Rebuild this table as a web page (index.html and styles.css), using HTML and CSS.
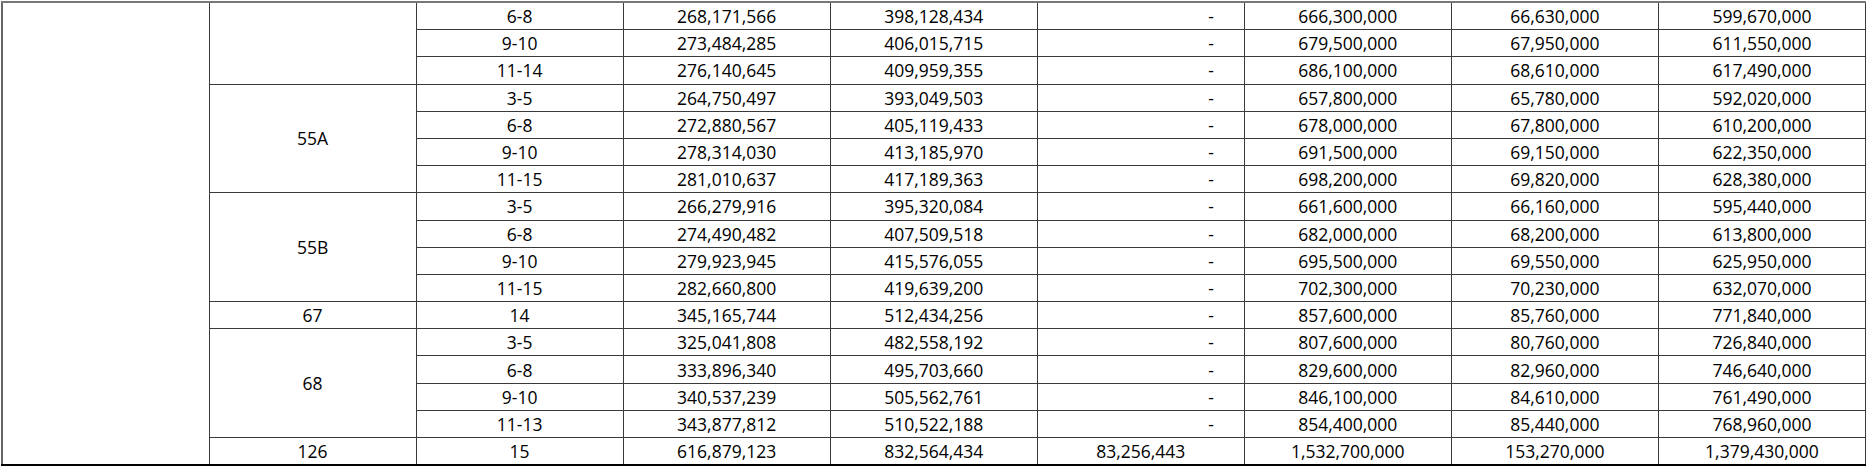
FILE: index.html
```html
<!DOCTYPE html>
<html>
<head>
<meta charset="utf-8">
<link rel="stylesheet" href="styles.css">
</head>
<body>
<table class="grid">
<colgroup>
<col class="c"><col class="c"><col class="c"><col class="c"><col class="c"><col class="c"><col class="c"><col class="c"><col class="c">
</colgroup>
<tbody>
<tr><td rowspan="17"></td><td rowspan="3"></td><td>6-8</td><td>268,171,566</td><td>398,128,434</td><td class="dash">-</td><td>666,300,000</td><td>66,630,000</td><td>599,670,000</td></tr>
<tr><td>9-10</td><td>273,484,285</td><td>406,015,715</td><td class="dash">-</td><td>679,500,000</td><td>67,950,000</td><td>611,550,000</td></tr>
<tr><td>11-14</td><td>276,140,645</td><td>409,959,355</td><td class="dash">-</td><td>686,100,000</td><td>68,610,000</td><td>617,490,000</td></tr>
<tr><td rowspan="4">55A</td><td>3-5</td><td>264,750,497</td><td>393,049,503</td><td class="dash">-</td><td>657,800,000</td><td>65,780,000</td><td>592,020,000</td></tr>
<tr><td>6-8</td><td>272,880,567</td><td>405,119,433</td><td class="dash">-</td><td>678,000,000</td><td>67,800,000</td><td>610,200,000</td></tr>
<tr><td>9-10</td><td>278,314,030</td><td>413,185,970</td><td class="dash">-</td><td>691,500,000</td><td>69,150,000</td><td>622,350,000</td></tr>
<tr><td>11-15</td><td>281,010,637</td><td>417,189,363</td><td class="dash">-</td><td>698,200,000</td><td>69,820,000</td><td>628,380,000</td></tr>
<tr><td rowspan="4">55B</td><td>3-5</td><td>266,279,916</td><td>395,320,084</td><td class="dash">-</td><td>661,600,000</td><td>66,160,000</td><td>595,440,000</td></tr>
<tr><td>6-8</td><td>274,490,482</td><td>407,509,518</td><td class="dash">-</td><td>682,000,000</td><td>68,200,000</td><td>613,800,000</td></tr>
<tr><td>9-10</td><td>279,923,945</td><td>415,576,055</td><td class="dash">-</td><td>695,500,000</td><td>69,550,000</td><td>625,950,000</td></tr>
<tr><td>11-15</td><td>282,660,800</td><td>419,639,200</td><td class="dash">-</td><td>702,300,000</td><td>70,230,000</td><td>632,070,000</td></tr>
<tr><td>67</td><td>14</td><td>345,165,744</td><td>512,434,256</td><td class="dash">-</td><td>857,600,000</td><td>85,760,000</td><td>771,840,000</td></tr>
<tr><td rowspan="4">68</td><td>3-5</td><td>325,041,808</td><td>482,558,192</td><td class="dash">-</td><td>807,600,000</td><td>80,760,000</td><td>726,840,000</td></tr>
<tr><td>6-8</td><td>333,896,340</td><td>495,703,660</td><td class="dash">-</td><td>829,600,000</td><td>82,960,000</td><td>746,640,000</td></tr>
<tr><td>9-10</td><td>340,537,239</td><td>505,562,761</td><td class="dash">-</td><td>846,100,000</td><td>84,610,000</td><td>761,490,000</td></tr>
<tr><td>11-13</td><td>343,877,812</td><td>510,522,188</td><td class="dash">-</td><td>854,400,000</td><td>85,440,000</td><td>768,960,000</td></tr>
<tr class="last"><td>126</td><td>15</td><td>616,879,123</td><td>832,564,434</td><td>83,256,443</td><td>1,532,700,000</td><td>153,270,000</td><td>1,379,430,000</td></tr>
</tbody>
</table>
</body>
</html>
```

FILE: styles.css
```css
html, body {
  margin: 0;
  padding: 0;
  background: #ffffff;
}

body {
  padding: 1px 0 0 1px;
}

.grid {
  border-collapse: collapse;
  table-layout: fixed;
  width: 1865px;
  font-family: "Open Sans", "Noto Sans", sans-serif;
  font-size: 17.5px;
  color: #000;
  border-left: 2px solid #666;
  border-right: 1px solid #333;
  border-top: 2px solid #777;
  border-bottom: 2px solid #000;
}

.grid td {
  border: 1px solid #3a3a3a;
  height: 26.2px;
  padding: 0;
  text-align: center;
  vertical-align: middle;
  line-height: 20px;
  white-space: nowrap;
}

.grid td.dash {
  text-align: right;
  padding-right: 30px;
}
```
